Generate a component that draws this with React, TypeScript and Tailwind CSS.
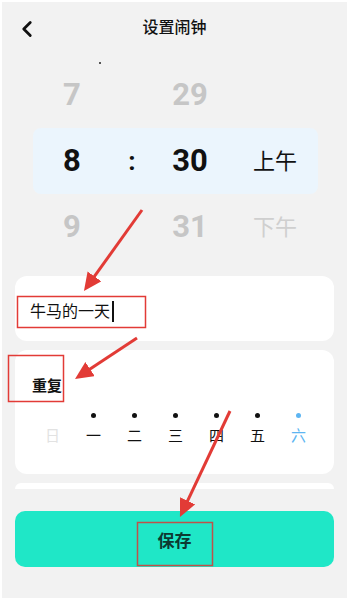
import { ChevronLeft } from 'lucide-react'

const font = { fontFamily: 'Roboto, "Noto Sans CJK SC", sans-serif' }

const days = [
  { label: '日', dot: false, color: 'text-[#e2e2e2]' },
  { label: '一', dot: true, color: 'text-[#111]' },
  { label: '二', dot: true, color: 'text-[#111]' },
  { label: '三', dot: true, color: 'text-[#111]' },
  { label: '四', dot: true, color: 'text-[#111]' },
  { label: '五', dot: true, color: 'text-[#111]' },
  { label: '六', dot: true, color: 'text-[#5db5f2]', blue: true },
]

function PickerRow({
  h,
  m,
  ampm,
  active,
}: {
  h: string
  m: string
  ampm: string
  active?: boolean
}) {
  const num = active ? 'text-[#111]' : 'text-[#c6c6c6]'
  return (
    <div
      className={`flex h-[66px] w-[285px] items-center ${active ? 'rounded-lg bg-[#ebf5fd]' : ''}`}
    >
      <div className={`w-[78px] text-center text-[31px] font-bold ${num}`}>{h}</div>
      <div className="w-[42px] text-center text-[26px] font-bold text-[#111]">{active ? ':' : ''}</div>
      <div className={`w-[74px] text-center text-[31px] font-bold ${num}`}>{m}</div>
      <div className={`pl-[26px] text-[22px] ${active ? 'text-[#111]' : 'text-[#cfcfcf]'}`}>{ampm}</div>
    </div>
  )
}

// red markup drawn over the screenshot
function Annotations() {
  const red = '#e23b36'
  return (
    <svg className="pointer-events-none absolute -left-[2px] -top-[2px]" width="349" height="600">
      <defs>
        <marker id="ah" markerWidth="7" markerHeight="6" refX="3" refY="2.8" orient="auto" markerUnits="strokeWidth">
          <path d="M0,0 L6,2.8 L0,5.6 Z" fill={red} />
        </marker>
      </defs>
      <line x1="142" y1="210" x2="89.2" y2="283.7" stroke={red} strokeWidth="3" markerEnd="url(#ah)" />
      <line x1="137" y1="338" x2="82.5" y2="374" stroke={red} strokeWidth="3" markerEnd="url(#ah)" />
      <line x1="230" y1="411" x2="183.8" y2="508.9" stroke={red} strokeWidth="3" markerEnd="url(#ah)" />
      <rect x="17.5" y="296.5" width="128" height="31" fill="none" stroke={red} strokeWidth="1.5" />
      <rect x="8.5" y="355.5" width="55" height="46" fill="none" stroke={red} strokeWidth="1.5" />
      <rect x="137.5" y="522.5" width="75" height="43" fill="none" stroke="#bf5249" strokeWidth="1.5" />
    </svg>
  )
}

export default function App() {
  return (
    <div
      style={font}
      className="relative h-[600px] w-[349px] overflow-hidden border-2 border-white bg-[#f2f2f2]"
    >
      {/* Header */}
      <div className="relative flex h-[52px] items-center justify-center">
        <ChevronLeft className="absolute left-[12px] top-[14px] h-[26px] w-[26px] text-[#111]" strokeWidth={2.6} />
        <span className="text-[16px] font-medium text-[#111]">设置闹钟</span>
      </div>
      <div className="absolute left-[97px] top-[60px] h-[1.5px] w-[1.5px] bg-[#555]" />

      {/* Time picker */}
      <div className="ml-[31px] mt-[8px] flex flex-col">
        <PickerRow h="7" m="29" ampm="" />
        <PickerRow h="8" m="30" ampm="上午" active />
        <PickerRow h="9" m="31" ampm="下午" />
      </div>

      {/* Name */}
      <div className="mx-[13px] mt-[16px] flex h-[65px] items-center rounded-xl bg-white pl-[15px] pt-[6px]">
        <span className="text-[16px] text-[#111]">牛马的一天</span>
        <span className="ml-[2px] h-[21px] w-[1.5px] bg-[#111]" />
      </div>

      {/* Repeat */}
      <div className="mx-[13px] mt-[9px] h-[124px] rounded-xl bg-white">
        <div className="pl-[17px] pt-[26px] text-[15px] font-bold leading-[20px] text-[#111]">重复</div>
        <div className="mt-[17px] flex pl-[17px]">
          {days.map((d) => (
            <div key={d.label} className="flex w-[41px] flex-col items-center">
              <div
                className={`h-[5px] w-[5px] rounded-full ${d.dot ? (d.blue ? 'bg-[#5db5f2]' : 'bg-[#111]') : 'bg-transparent'}`}
              />
              <div className={`mt-[8px] text-[15px] leading-[20px] ${d.color}`}>{d.label}</div>
            </div>
          ))}
        </div>
      </div>

      {/* Next card, mostly hidden */}
      <div className="mx-[13px] mt-[9px] h-[6px] rounded-t-xl bg-white" />

      {/* Save */}
      <div className="mx-[13px] mt-[22px] flex h-[56px] items-center justify-center rounded-[10px] bg-[#1fe7c7] pt-[6px]">
        <span className="text-[17px] font-bold text-[#0d3a32]">保存</span>
      </div>

      <Annotations />
    </div>
  )
}
